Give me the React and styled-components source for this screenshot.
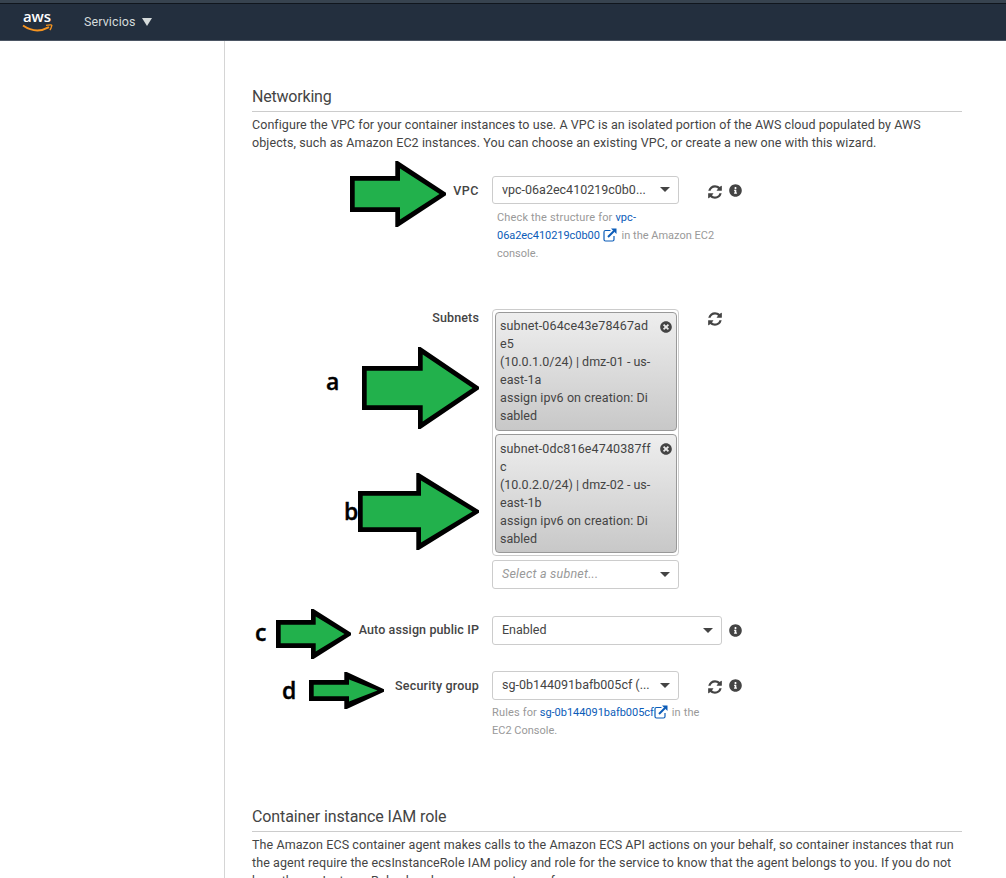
import React from "react";
import styled, { createGlobalStyle } from "styled-components";
import { FaInfoCircle, FaTimesCircle } from "react-icons/fa";

const GlobalStyle = createGlobalStyle`
  * { box-sizing: border-box; }
  body {
    margin: 0;
    background: #fff;
    color: #444;
    font-family: Roboto, "Liberation Sans", sans-serif;
    font-size: 12.5px;
    line-height: 18px;
    overflow: hidden;
  }
`;

const Page = styled.div`
  position: relative;
  height: 878px;
  overflow: hidden;
  display: flex;
  flex-direction: column;
`;

const TopBar = styled.header`
  flex: none;
  height: 41px;
  display: flex;
  align-items: center;
  padding-left: 21px;
  background: #232f3e;
  border-top: 3px solid #37434f;
  border-bottom: 1px solid #4b5563;
  box-shadow: inset 0 1px 0 #10161d;
`;

const Logo = styled.div`
  width: 32px;
  height: 26px;
  display: flex;
  flex-direction: column;
  align-items: center;
  color: #fff;
  font: 600 15px/15px "Open Sans", sans-serif;
  svg { display: block; }
`;

const Services = styled.button`
  display: flex;
  align-items: center;
  gap: 6px;
  margin-left: 31px;
  padding: 0;
  border: 0;
  background: none;
  color: #d5dbdb;
  font: 12.5px/18px Roboto, sans-serif;
  letter-spacing: 0.1px;
`;

const Body = styled.div`
  flex: 1;
  display: flex;
  min-height: 0;
`;

const Sidebar = styled.aside`
  flex: none;
  width: 225px;
  border-right: 1px solid #d5d5d5;
`;

const Content = styled.main`
  width: 737px;
  padding: 43px 0 0 27px;
`;

const Title = styled.h2`
  margin: 0;
  height: 28px;
  border-bottom: 1px solid #ccc;
  font-size: 16px;
  font-weight: 400;
  line-height: 25px;
  letter-spacing: ${(p) => p.$ls || 0}px;
`;

const Paragraph = styled.p`
  margin: 4px 0 0;
`;

const Line = styled.span`
  display: block;
  white-space: pre;
  letter-spacing: ${(p) => p.$ls || 0}px;
`;

const Row = styled.div`
  display: flex;
  align-items: flex-start;
  margin-top: ${(p) => p.$top}px;
`;

const Label = styled.label`
  width: 227px;
  margin-right: 13px;
  padding-top: ${(p) => p.$pad}px;
  text-align: right;
  font-weight: 500;
  letter-spacing: ${(p) => p.$ls || 0}px;
`;

const Field = styled.div`
  width: ${(p) => p.$w || 187}px;
`;

const Select = styled.div`
  display: flex;
  align-items: center;
  justify-content: space-between;
  height: ${(p) => p.$h || 29}px;
  padding: 0 8px 1px 9px;
  border: 1px solid #ccc;
  border-radius: 3px;
  background: #fff;
  font-style: ${(p) => (p.$empty ? "italic" : "normal")};
  color: ${(p) => (p.$empty ? "#999" : "#444")};
  letter-spacing: ${(p) => p.$ls || 0}px;
  white-space: nowrap;
`;

const Caret = styled.i`
  border: 5px solid transparent;
  border-top: 5px solid #444;
  border-bottom: 0;
`;

const Help = styled.div`
  width: 240px;
  margin: ${(p) => p.$top || 4}px 0 0 ${(p) => p.$left || 0}px;
  font-size: 11px;
  color: #999;
`;

const Link = styled.a`
  color: #0b5cb8;
  letter-spacing: ${(p) => p.$ls || 0}px;
`;

const TokenBox = styled.div`
  height: 247px;
  padding: 2px;
  border: 1px solid #ccc;
  border-radius: 4px;
  margin-bottom: 4px;
`;

const Token = styled.div`
  display: flex;
  justify-content: space-between;
  height: 119px;
  width: 182px;
  padding: 4.2px 4px 0;
  margin-bottom: 3.4px;
  border: 1px solid #999;
  border-radius: 4px;
  background: linear-gradient(#eee, #c8c8c8);
  svg { flex: none; margin-top: 3.8px; }
`;

const Actions = styled.div`
  display: flex;
  gap: 6px;
  color: #444;
  padding: ${(p) => p.$pad || 8}px 0 0 ${(p) => p.$left || 28}px;
  svg { flex: none; display: block; }
`;

const Shape = styled.svg`
  position: absolute;
  left: ${(p) => p.$x}px;
  top: ${(p) => p.$y}px;
`;

const Letter = styled.span`
  position: absolute;
  left: ${(p) => p.$x}px;
  top: ${(p) => p.$y}px;
  color: #000;
  font: 600 23px/24px "Open Sans", "Noto Sans", sans-serif;
  -webkit-text-stroke: 0.4px #000;
`;

const Refresh = () => (
  <svg width="16" height="16" viewBox="0 0 1792 1792" fill="currentColor">
    <path d="M1639 1056q0 5-1 7-64 268-268 434.5t-478 166.5q-146 0-282.5-55t-243.5-157l-129 129q-19 19-45 19t-45-19-19-45v-448q0-26 19-45t45-19h448q26 0 45 19t19 45-19 45l-137 137q71 66 161 102t187 36q134 0 250-65t186-179q11-17 53-117 8-23 30-23h192q13 0 22.5 9.5t9.5 22.5zm25-800v448q0 26-19 45t-45 19h-448q-26 0-45-19t-19-45 19-45l138-138q-148-137-349-137-134 0-250 65t-186 179q-11 17-53 117-8 23-30 23h-199q-13 0-22.5-9.5t-9.5-22.5v-7q65-268 270-434.5t480-166.5q146 0 284 55.5t245 156.5l130-129q19-19 45-19t45 19 19 45z" />
  </svg>
);

const ExternalIcon = styled.svg`
  vertical-align: -3px;
  margin-left: ${(p) => p.$ml || 0}px;
  margin-right: ${(p) => p.$mr || 0}px;
`;

const External = (props) => (
  <ExternalIcon width="14" height="14" viewBox="0 0 14 14" fill="none" stroke="#0b5cb8" {...props}>
    <path d="M7.5 2.5H2.5Q1 2.5 1 4V11.5Q1 13 2.5 13H9.5Q11 13 11 11.5V8" strokeWidth="1.2" />
    <path d="M5 9L11 3" strokeWidth="2" />
    <path d="M8 .5H13.5V6Z" fill="#0b5cb8" stroke="none" />
  </ExternalIcon>
);

// A block arrow: black silhouette with a green inset. n is where the head starts, t and b bound the shaft.
const Arrow = ({ x, y, w, h, n, t, b }) => {
  const m = h / 2;
  const i = n + 4.7;
  return (
    <Shape $x={x} $y={y} width={w} height={h} viewBox={`0 0 ${w} ${h}`}>
      <polygon
        points={`0,${t} ${n},${t} ${n},0 ${n + 2.5},0 ${w},${m - 1.2} ${w},${m + 1.2} ${n + 2.5},${h} ${n},${h} ${n},${b} 0,${b}`}
        fill="#000"
      />
      <polygon
        points={`4.7,${t + 4.7} ${i},${t + 4.7} ${i},7.5 ${w - 6.5},${m} ${i},${h - 7.5} ${i},${b - 4.7} 4.7,${b - 4.7}`}
        fill="#22b14c"
      />
    </Shape>
  );
};

export default function App() {
  return (
    <Page>
      <GlobalStyle />
      <TopBar>
        <Logo>
          aws
          <svg width="31" height="10" viewBox="0 0 31 10" fill="none" stroke="#f79520">
            <path d="M1 1.5Q14 10.5 27 3.2" strokeWidth="2" />
            <path d="M24 1.3Q31 0 29.6 2.2 29.2 4.5 27.8 6" strokeWidth="1.3" />
          </svg>
        </Logo>
        <Services>
          Servicios
          <svg width="10" height="8" viewBox="0 0 10 8" fill="currentColor"><path d="M0 0H10L5 8Z" /></svg>
        </Services>
      </TopBar>
      <Body>
        <Sidebar />
        <Content>
          <Title $ls={-0.2}>Networking</Title>
          <Paragraph>
            <Line $ls={0.063}>Configure the VPC for your container instances to use. A VPC is an isolated portion of the AWS cloud populated by AWS</Line>
            <Line $ls={0.1}>objects, such as Amazon EC2 instances. You can choose an existing VPC, or create a new one with this wizard.</Line>
          </Paragraph>
          <Row $top={24}>
            <Label $pad={6} $ls={0.5}>VPC</Label>
            <Field>
              <Select $h={28}>vpc-06a2ec410219c0b0...<Caret /></Select>
              <Help $left={5} $top={5}>
                <Line $ls={0.16}>Check the structure for <Link $ls={0.1}>vpc-</Link></Line>
                <Line><Link $ls={-0.05}>06a2ec410219c0b00</Link><External $ml={3} $mr={2} /> in the Amazon EC2</Line>
                <Line>console.</Line>
              </Help>
            </Field>
            <Actions $pad={7.5}><Refresh /><FaInfoCircle size={13} /></Actions>
          </Row>
          <Row $top={46}>
            <Label $pad={0} $ls={0.14}>Subnets</Label>
            <Field>
              <TokenBox>
                <Token>
                  <div>
                    <Line $ls={0.13}>subnet-064ce43e78467ad</Line>
                    <Line>e5</Line>
                    <Line>(10.0.1.0/24) | dmz-01 - us-</Line>
                    <Line>east-1a</Line>
                    <Line $ls={0.08}>assign ipv6 on creation: Di</Line>
                    <Line>sabled</Line>
                  </div>
                  <FaTimesCircle size={12} />
                </Token>
                <Token>
                  <div>
                    <Line $ls={0.13}>subnet-0dc816e4740387ff</Line>
                    <Line>c</Line>
                    <Line>(10.0.2.0/24) | dmz-02 - us-</Line>
                    <Line>east-1b</Line>
                    <Line $ls={0.08}>assign ipv6 on creation: Di</Line>
                    <Line>sabled</Line>
                  </div>
                  <FaTimesCircle size={12} />
                </Token>
              </TokenBox>
              <Select $empty $ls={0.22}>Select a subnet...<Caret /></Select>
            </Field>
            <Actions $pad={2}><Refresh /></Actions>
          </Row>
          <Row $top={27}>
            <Label $pad={5} $ls={0.12}>Auto assign public IP</Label>
            <Field $w={230}><Select>Enabled<Caret /></Select></Field>
            <Actions $left={7} $pad={7.5}><FaInfoCircle size={13} /></Actions>
          </Row>
          <Row $top={26}>
            <Label $pad={6} $ls={0.2}>Security group</Label>
            <Field>
              <Select>sg-0b144091bafb005cf (...<Caret /></Select>
              <Help>
                <Line $ls={0.15}>Rules for <Link $ls={-0.03}>sg-0b144091bafb005cf</Link><External $mr={1} /> in the</Line>
                <Line>EC2 Console.</Line>
              </Help>
            </Field>
            <Actions $pad={8.3}><Refresh /><FaInfoCircle size={13} /></Actions>
          </Row>
          <Row $top={64} />
          <Title $ls={-0.1}>Container instance IAM role</Title>
          <Paragraph>
            <Line $ls={0.09}>The Amazon ECS container agent makes calls to the Amazon ECS API actions on your behalf, so container instances that run</Line>
            <Line $ls={0.087}>the agent require the ecsInstanceRole IAM policy and role for the service to know that the agent belongs to you. If you do not</Line>
            <Line $ls={0.08}>have the ecsInstanceRole already, we can create one for you.</Line>
          </Paragraph>
        </Content>
      </Body>
      <Arrow x={350} y={161} w={96} h={66} n={45.3} t={15} b={51} />
      <Arrow x={362} y={347} w={117} h={82} n={56} t={19} b={63} />
      <Arrow x={358} y={473} w={121} h={77} n={58.3} t={18} b={59} />
      <Arrow x={276} y={609} w={75} h={50} n={35} t={11} b={39} />
      <Arrow x={309} y={672} w={75} h={37} n={35.3} t={8} b={29} />
      <Letter $x={326} $y={369}>a</Letter>
      <Letter $x={344} $y={499}>b</Letter>
      <Letter $x={255} $y={620}>c</Letter>
      <Letter $x={282} $y={678}>d</Letter>
    </Page>
  );
}
